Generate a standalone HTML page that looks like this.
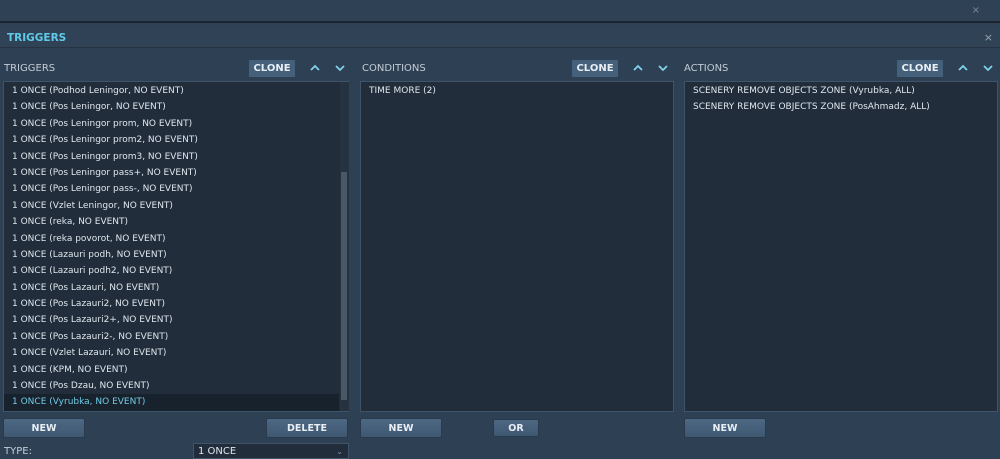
<!DOCTYPE html>
<html><head><style>
*{margin:0;padding:0;box-sizing:border-box}
body{width:1000px;height:457px;overflow:hidden;background:#2e4053;font-family:"DejaVu Sans","Liberation Sans",sans-serif;color:#dfe6ee;position:relative}
.a{position:absolute}
.top{left:0;top:0;width:1000px;height:23px;background:#2f4154;border-bottom:2px solid #1b2530}
.title{left:0;top:25px;width:1000px;height:23px;background:#2f4256;border-bottom:1px solid #263444}
.lbl{font-size:10px;color:#c3ccd6}
.list{background:#212d3a;border:1px solid #3f5468}
.row{height:16.4px;line-height:16.4px;font-size:9px;padding-left:8px;white-space:nowrap}
.btn{background:linear-gradient(#4d6883,#3f5872);border:1px solid #2a3a4c;border-radius:2px;font-size:9.5px;font-weight:bold;color:#e8eef4;text-align:center}
.clone{background:#45607b;height:17px;line-height:17px;width:46px;font-size:10px;font-weight:bold;text-align:center;color:#e8eef4;border-radius:1px}
</style></head><body>
<div class="a top"></div>
<div class="a" style="right:20px;top:5px;font-size:10px;color:#7c8a99">×</div>
<div class="a title"></div>
<div class="a" style="left:7px;top:32px;font-size:10.5px;font-weight:bold;color:#5fcbe9">TRIGGERS</div>
<div class="a" style="right:7px;top:31px;font-size:11px;color:#9aa6b3">×</div>

<div class="a lbl" style="left:4px;top:63px">TRIGGERS</div>
<div class="a clone" style="left:249px;top:60px">CLONE</div>
<svg class="a" style="left:309px;top:63px" width="40" height="10"><path d="M2 7L6 3L10 7M27 3L31 7L35 3" stroke="#7fd3ec" stroke-width="1.8" fill="none"/></svg>
<div class="a lbl" style="left:362px;top:63px">CONDITIONS</div>
<div class="a clone" style="left:572px;top:60px">CLONE</div>
<svg class="a" style="left:632px;top:63px" width="40" height="10"><path d="M2 7L6 3L10 7M27 3L31 7L35 3" stroke="#7fd3ec" stroke-width="1.8" fill="none"/></svg>
<div class="a lbl" style="left:684px;top:63px">ACTIONS</div>
<div class="a clone" style="left:897px;top:60px">CLONE</div>
<svg class="a" style="left:957px;top:63px" width="40" height="10"><path d="M2 7L6 3L10 7M27 3L31 7L35 3" stroke="#7fd3ec" stroke-width="1.8" fill="none"/></svg>

<div class="a list" style="left:3px;top:81px;width:346px;height:331px">
<div style="padding-top:1px">
<div class="row">1 ONCE (Podhod Leningor, NO EVENT)</div>
<div class="row">1 ONCE (Pos Leningor, NO EVENT)</div>
<div class="row">1 ONCE (Pos Leningor prom, NO EVENT)</div>
<div class="row">1 ONCE (Pos Leningor prom2, NO EVENT)</div>
<div class="row">1 ONCE (Pos Leningor prom3, NO EVENT)</div>
<div class="row">1 ONCE (Pos Leningor pass+, NO EVENT)</div>
<div class="row">1 ONCE (Pos Leningor pass-, NO EVENT)</div>
<div class="row">1 ONCE (Vzlet Leningor, NO EVENT)</div>
<div class="row">1 ONCE (reka, NO EVENT)</div>
<div class="row">1 ONCE (reka povorot, NO EVENT)</div>
<div class="row">1 ONCE (Lazauri podh, NO EVENT)</div>
<div class="row">1 ONCE (Lazauri podh2, NO EVENT)</div>
<div class="row">1 ONCE (Pos Lazauri, NO EVENT)</div>
<div class="row">1 ONCE (Pos Lazauri2, NO EVENT)</div>
<div class="row">1 ONCE (Pos Lazauri2+, NO EVENT)</div>
<div class="row">1 ONCE (Pos Lazauri2-, NO EVENT)</div>
<div class="row">1 ONCE (Vzlet Lazauri, NO EVENT)</div>
<div class="row">1 ONCE (KPM, NO EVENT)</div>
<div class="row">1 ONCE (Pos Dzau, NO EVENT)</div>
<div class="row" style="background:#18222d;color:#6fcbe6;width:335px">1 ONCE (Vyrubka, NO EVENT)</div>
</div>
<div class="a" style="left:336px;top:0;width:9px;height:329px;background:#26323f"></div>
<div class="a" style="left:337px;top:90px;width:6px;height:228px;background:#4a5866"></div>
</div>

<div class="a list" style="left:360px;top:81px;width:314px;height:331px">
<div class="row" style="margin-top:1px">TIME MORE (2)</div>
</div>
<div class="a list" style="left:684px;top:81px;width:314px;height:331px">
<div style="padding-top:1px">
<div class="row">SCENERY REMOVE OBJECTS ZONE (Vyrubka, ALL)</div>
<div class="row">SCENERY REMOVE OBJECTS ZONE (PosAhmadz, ALL)</div>
</div>
</div>

<div class="a btn" style="left:3px;top:418px;width:82px;height:20px;line-height:19px">NEW</div>
<div class="a btn" style="left:266px;top:418px;width:82px;height:20px;line-height:19px">DELETE</div>
<div class="a btn" style="left:360px;top:418px;width:82px;height:20px;line-height:19px">NEW</div>
<div class="a btn" style="left:493px;top:419px;width:46px;height:18px;line-height:17px">OR</div>
<div class="a btn" style="left:684px;top:418px;width:82px;height:20px;line-height:19px">NEW</div>

<div class="a lbl" style="left:4px;top:446px">TYPE:</div>
<div class="a" style="left:193px;top:443px;width:156px;height:16px;background:#212d3a;border:1px solid #3f5468;font-size:10px;padding-left:4px;line-height:15px">1 ONCE<span style="position:absolute;right:5px;top:0;color:#8a96a3;font-size:8px">⌄</span></div>
</body></html>
